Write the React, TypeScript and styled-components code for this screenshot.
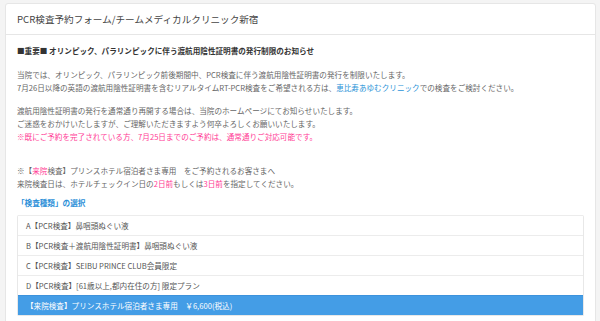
import React from "react";
import styled, { createGlobalStyle } from "styled-components";

const Global = createGlobalStyle`
  html, body { margin: 0; padding: 0; background: #f4f4f4; }
  body { font-family: "Noto Sans CJK JP", "Noto Sans", sans-serif; color: #666; }
`;

const Page = styled.div`
  padding: 3px 4px 0 5px;
  height: 318px;
  overflow: hidden;
`;

const Panel = styled.section`
  background: #fff;
  border: 1px solid #e6e6e6;
  border-radius: 3px;
  height: 340px;
`;

const Header = styled.header`
  height: 30px;
  line-height: 30px;
  padding: 0 11px;
  font-size: 9.6px;
  color: #444;
  border-bottom: 1px solid #e6e6e6;
`;

const Body = styled.div`
  padding: 9px 11px 0 11px;
  font-size: 7.6px;
  line-height: 13px;
`;

const Heading = styled.p`
  margin: 0 0 11px;
  font-weight: bold;
  color: #333;
`;

const Para = styled.p<{ $gap: number }>`
  margin: 0 0 ${(p) => p.$gap}px;
`;

const Link = styled.a`
  color: #2c94d8;
  text-decoration: none;
`;

const Pink = styled.span`
  color: #ff3c96;
`;

const PinkLine = styled.span`
  color: #ff3c96;
  display: block;
`;

const Label = styled.div`
  color: #2c8fd8;
  font-weight: bold;
  margin: 0 0 6px;
`;

const List = styled.ul`
  list-style: none;
  margin: 0;
  padding: 0;
  border: 1px solid #e8e8e8;
  border-top: none;
  border-radius: 2px;
`;

const Item = styled.li<{ $active?: boolean }>`
  height: 19px;
  line-height: 19px;
  padding: 0 8px;
  border-top: 1px solid ${(p) => (p.$active ? "#3c92dc" : "#ececec")};
  background: ${(p) => (p.$active ? "#449de6" : "#fff")};
  color: ${(p) => (p.$active ? "#fff" : "#555")};
`;

export default function App() {
  return (
    <>
      <Global />
      <Page>
        <Panel>
          <Header>PCR検査予約フォーム/チームメディカルクリニック新宿</Header>
          <Body>
            <Heading>■重要■ オリンピック、パラリンピックに伴う渡航用陰性証明書の発行制限のお知らせ</Heading>
            <Para $gap={10}>
              当院では、オリンピック、パラリンピック前後期間中、PCR検査に伴う渡航用陰性証明書の発行を制限いたします。
              <br />
              7月26日以降の英語の渡航用陰性証明書を含むリアルタイムRT-PCR検査をご希望される方は、
              <Link href="#">恵比寿あゆむクリニック</Link>での検査をご検討ください。
            </Para>
            <Para $gap={21}>
              渡航用陰性証明書の発行を通常通り再開する場合は、当院のホームページにてお知らせいたします。
              <br />
              ご迷惑をおかけいたしますが、ご理解いただきますよう何卒よろしくお願いいたします。
              <PinkLine>※既にご予約を完了されている方、7月25日までのご予約は、通常通りご対応可能です。</PinkLine>
            </Para>
            <Para $gap={6}>
              ※【<Pink>来院</Pink>検査】プリンスホテル宿泊者さま専用　をご予約されるお客さまへ
              <br />
              来院検査日は、ホテルチェックイン日の<Pink>2日前</Pink>もしくは<Pink>3日前</Pink>を指定してください。
            </Para>
            <Label>「検査種類」の選択</Label>
            <List>
              <Item>A【PCR検査】鼻咽頭ぬぐい液</Item>
              <Item>B【PCR検査＋渡航用陰性証明書】鼻咽頭ぬぐい液</Item>
              <Item>C【PCR検査】SEIBU PRINCE CLUB会員限定</Item>
              <Item>D【PCR検査】[61歳以上,都内在住の方] 限定プラン</Item>
              <Item $active>【来院検査】プリンスホテル宿泊者さま専用　￥6,600(税込)</Item>
            </List>
          </Body>
        </Panel>
      </Page>
    </>
  );
}
